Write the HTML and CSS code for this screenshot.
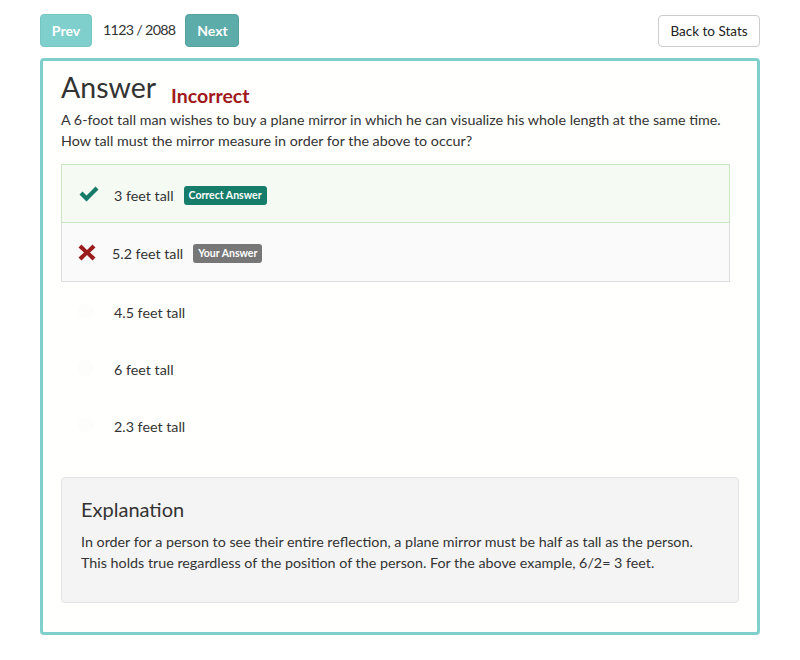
FILE: index.html
```html
<!DOCTYPE html>
<html>
<head>
<meta charset="utf-8">
<link rel="stylesheet" href="styles.css">
</head>
<body>
<div class="page">
  <div class="topbar">
    <div class="nav">
      <button class="btn btn-prev">Prev</button>
      <span class="counter">1123 / 2088</span>
      <button class="btn btn-next">Next</button>
    </div>
    <button class="btn btn-back">Back to Stats</button>
  </div>
  <div class="card">
    <div class="title-row">
      <h1 class="title">Answer</h1>
      <span class="status">Incorrect</span>
    </div>
    <p class="question">A 6-foot tall man wishes to buy a plane mirror in which he can visualize his whole length at the same time. How tall must the mirror measure in order for the above to occur?</p>
    <ul class="options">
      <li class="option correct">
        <span class="icon"><svg width="22" height="16" viewBox="0 0 22 16"><path d="M1.5 8.5 L4.5 5.5 L8.5 9.5 L17.5 0.5 L20.5 3.5 L8.5 15.5 Z" fill="#177a69"/></svg></span>
        <span class="label">3 feet tall</span>
        <span class="badge badge-correct">Correct Answer</span>
      </li>
      <li class="option wrong">
        <span class="icon"><svg width="18" height="17" viewBox="0 0 18 17"><path d="M0.5 3.5 L3.5 0.5 L9 6 L14.5 0.5 L17.5 3.5 L12 8.5 L17.5 13.5 L14.5 16.5 L9 11 L3.5 16.5 L0.5 13.5 L6 8.5 Z" fill="#9a1b1b"/></svg></span>
        <span class="label label-wrong">5.2 feet tall</span>
        <span class="badge badge-your">Your Answer</span>
      </li>
      <li class="option plain">
        <span class="icon"><span class="dot"></span></span>
        <span class="label">4.5 feet tall</span>
      </li>
      <li class="option plain">
        <span class="icon"><span class="dot"></span></span>
        <span class="label">6 feet tall</span>
      </li>
      <li class="option plain">
        <span class="icon"><span class="dot"></span></span>
        <span class="label">2.3 feet tall</span>
      </li>
    </ul>
    <div class="well">
      <h2 class="well-title">Explanation</h2>
      <p class="well-text">In order for a person to see their entire reflection, a plane mirror must be half as tall as the person. This holds true regardless of the position of the person. For the above example, 6/2= 3 feet.</p>
    </div>
  </div>
</div>
</body>
</html>
```
FILE: styles.css
```css
* { box-sizing: border-box; }
html, body { margin: 0; padding: 0; background: #fff; }
body {
  font-family: "Lato", "Open Sans", sans-serif;
  color: #333;
  font-size: 14.3px;
}
.page {
  width: 720px;
  margin: 0 40px;
  padding-top: 14px;
}
.topbar {
  display: flex;
  justify-content: space-between;
  align-items: flex-start;
  height: 44px;
}
.nav {
  display: flex;
  align-items: center;
  gap: 10px;
}
.btn {
  font-family: inherit;
  font-size: 14px;
  border-radius: 4px;
  height: 33px;
  padding: 0 12px;
  border: 1px solid transparent;
  cursor: pointer;
}
.btn-prev {
  background: #7fcfcc;
  border-color: #74c6c2;
  color: #fff;
  font-weight: 700;
  width: 52px;
  padding: 0;
}
.btn-next {
  background: #5cacaa;
  border-color: #53a29f;
  color: #fff;
  font-weight: 700;
  width: 54px;
  padding: 0;
}
.counter {
  font-size: 14.3px;
  letter-spacing: -0.7px;
  color: #333;
  white-space: nowrap;
  margin-top: -3px;
  margin-left: 1px;
}
.btn-back {
  background: #fff;
  border-color: #ccc;
  color: #222;
  width: 102px;
  height: 32px;
  margin-top: 1px;
  padding: 0;
  font-size: 13.5px;
}
.card {
  border: 3px solid #7fd0cc;
  border-radius: 4px;
  background: #fffffd;
  padding: 2px 18px 29px 18px;
}
.title-row {
  display: flex;
  align-items: flex-end;
  gap: 15px;
  height: 42px;
}
.title {
  margin: 0;
  font-size: 28.5px;
  font-weight: 400;
  line-height: 36px;
  color: #333;
}
.status {
  color: #a0191c;
  font-weight: 700;
  font-size: 19.5px;
  line-height: 24px;
  margin-bottom: -3px;
}
.question {
  margin: 4px 0 0 0;
  line-height: 21px;
  color: #333;
}
.options {
  list-style: none;
  margin: 13px 9px 0 0;
  padding: 0;
}
.option {
  display: flex;
  align-items: center;
  height: 58px;
  padding-left: 16px;
  padding-top: 3px;
  border: 1px solid transparent;
}
.option.correct {
  background: #f5fbf3;
  border-color: #c8e6c0;
  height: 59px;
}
.option.wrong {
  background: #fafafa;
  border-color: #dddddd;
  border-top: none;
  height: 59px;
}
.option.plain { height: 57px; }
.icon {
  width: 36px;
  display: flex;
  align-items: center;
  margin-top: -3px;
}
.dot {
  width: 16px;
  height: 16px;
  border-radius: 50%;
  background: #fdfdfb;
}
.label {
  color: #333;
}
.label-wrong { margin-left: -2px; }
.badge {
  display: inline-block;
  margin-left: 10px;
  color: #fff;
  font-weight: 700;
  font-size: 10.5px;
  line-height: 19px;
  padding: 0 5px;
  border-radius: 3px;
}
.badge-correct { background: #177d6b; }
.badge-your { background: #777; }
.well {
  margin-top: 24px;
  background: #f4f4f4;
  border: 1px solid #e3e3e3;
  border-radius: 4px;
  padding: 18px 19px 29px 19px;
  height: 126px;
}
.well-title {
  margin: 0;
  font-size: 20px;
  font-weight: 400;
  line-height: 26px;
  color: #333;
}
.well-text {
  margin: 9px 0 0 0;
  line-height: 21px;
  color: #333;
}
```
